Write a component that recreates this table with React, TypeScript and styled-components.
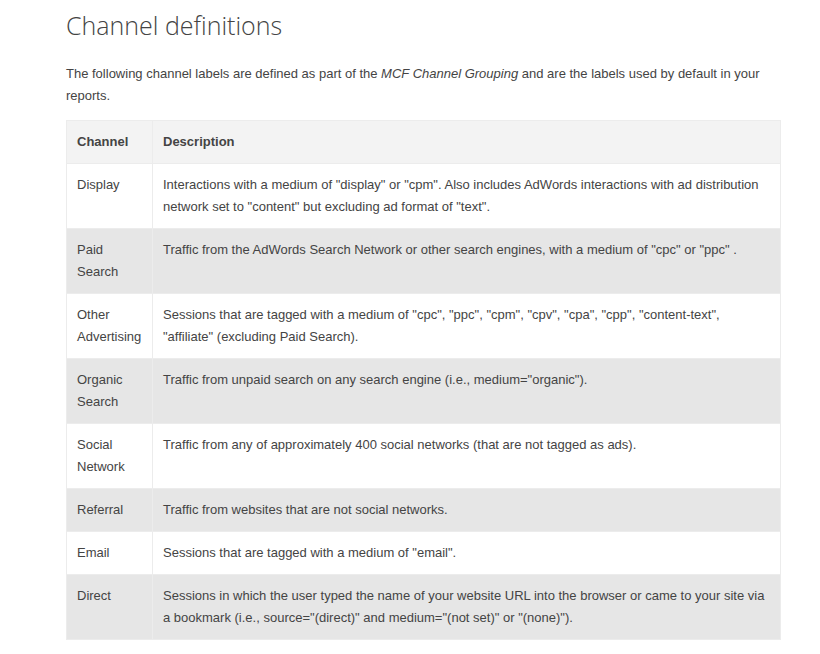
import { createGlobalStyle } from 'styled-components';
import styled from 'styled-components';

const GlobalStyle = createGlobalStyle`
    body {
        margin: 0;
        background: #fff;
        color: #444;
        font-family: 'Liberation Sans', Arial, sans-serif;
        font-size: 13px;
        line-height: 22px;
    }
`;

const Page = styled.main`
    width: 715px;
    padding: 7px 0 0 66px;
`;

const Title = styled.h1`
    margin: 0 0 20px;
    font-family: 'Open Sans', sans-serif;
    font-weight: 300;
    font-size: 25px;
    line-height: 36px;
    color: #444;
`;

const Intro = styled.p`
    margin: 0 0 13px;
`;

const Table = styled.table`
    width: 100%;
    border-collapse: collapse;
    border: 1px solid #ececec;
`;

const HeadCell = styled.th`
    background: #f3f3f3;
    border: 1px solid #ececec;
    padding: 10px 10px;
    text-align: left;
    font-weight: bold;
    color: #444;
`;

const Row = styled.tr<{ $shaded: boolean }>`
    background: ${(p) => (p.$shaded ? '#e6e6e6' : '#fff')};
`;

const Cell = styled.td<{ $narrow?: boolean }>`
    border: 1px solid #ececec;
    padding: 10px 10px;
    vertical-align: top;
    text-align: left;
    width: ${(p) => (p.$narrow ? '65px' : 'auto')};
`;

const rows: [string, string][] = [
    [
        'Display',
        'Interactions with a medium of "display" or "cpm". Also includes AdWords interactions with ad distribution network set to "content" but excluding ad format of "text".',
    ],
    [
        'Paid Search',
        'Traffic from the AdWords Search Network or other search engines, with a medium of "cpc" or "ppc" .',
    ],
    [
        'Other Advertising',
        'Sessions that are tagged with a medium of "cpc", "ppc", "cpm", "cpv", "cpa", "cpp", "content-text", "affiliate" (excluding Paid Search).',
    ],
    ['Organic Search', 'Traffic from unpaid search on any search engine (i.e., medium="organic").'],
    ['Social Network', 'Traffic from any of approximately 400 social networks (that are not tagged as ads).'],
    ['Referral', 'Traffic from websites that are not social networks.'],
    ['Email', 'Sessions that are tagged with a medium of "email".'],
    [
        'Direct',
        'Sessions in which the user typed the name of your website URL into the browser or came to your site via a bookmark (i.e., source="(direct)" and medium="(not set)" or "(none)").',
    ],
];

export default function App() {
    return (
        <>
            <GlobalStyle />
            <Page>
                <Title>Channel definitions</Title>
                <Intro>
                    The following channel labels are defined as part of the <em>MCF Channel Grouping</em> and are the
                    labels used by default in your reports.
                </Intro>
                <Table>
                    <thead>
                        <tr>
                            <HeadCell>Channel</HeadCell>
                            <HeadCell>Description</HeadCell>
                        </tr>
                    </thead>
                    <tbody>
                        {rows.map(([name, text], i) => (
                            <Row key={name} $shaded={i % 2 === 1}>
                                <Cell $narrow>{name}</Cell>
                                <Cell>{text}</Cell>
                            </Row>
                        ))}
                    </tbody>
                </Table>
            </Page>
        </>
    );
}
